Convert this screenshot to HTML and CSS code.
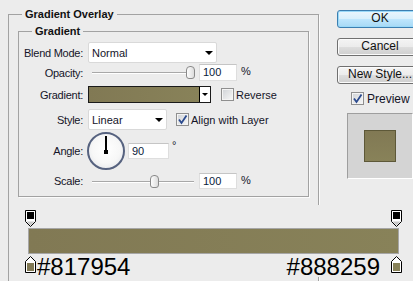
FILE: index.html
```html
<!DOCTYPE html>
<html>
<head>
<meta charset="utf-8">
<link rel="stylesheet" href="styles.css">
</head>
<body>
<div class="dialog">
  <fieldset class="group outer">
    <legend class="title">Gradient Overlay</legend>
    <fieldset class="group inner">
      <legend class="subtitle">Gradient</legend>
      <div class="row r-blend">
        <span class="lbl">Blend Mode:</span>
        <div class="select w-blend"><span class="val">Normal</span><i class="arrow"></i></div>
      </div>
      <div class="row r-opacity">
        <span class="lbl">Opacity:</span>
        <div class="slider"><div class="thumb" style="left:94px"></div></div>
        <div class="num">100</div><span class="unit">%</span>
      </div>
      <div class="row r-grad">
        <span class="lbl">Gradient:</span>
        <div class="gradpick"><div class="gradfill"></div><div class="gradarrow"><i class="arrow"></i></div></div>
        <span class="cb"></span><span class="cbtext">Reverse</span>
      </div>
      <div class="row r-style">
        <span class="lbl">Style:</span>
        <div class="select w-style"><span class="val">Linear</span><i class="arrow"></i></div>
        <span class="cb checked"><svg width="11" height="11" viewBox="0 0 11 11"><path d="M2 5.5 L4.5 9 L9.5 1.5" fill="none" stroke="#2b4a8e" stroke-width="1.8"/></svg></span><span class="cbtext">Align with Layer</span>
      </div>
      <div class="row r-angle">
        <span class="lbl">Angle:</span>
        <div class="dial"><div class="needle"></div><div class="hub"></div></div>
        <div class="num short">90</div><span class="deg">°</span>
      </div>
      <div class="row r-scale">
        <span class="lbl">Scale:</span>
        <div class="slider"><div class="thumb" style="left:58px"></div></div>
        <div class="num">100</div><span class="unit">%</span>
      </div>
    </fieldset>
  </fieldset>
  <div class="side">
    <div class="btn default">OK</div>
    <div class="btn">Cancel</div>
    <div class="btn">New Style...</div>
    <div class="preview-row">
      <span class="cb checked"><svg width="11" height="11" viewBox="0 0 11 11"><path d="M2 5.5 L4.5 9 L9.5 1.5" fill="none" stroke="#2b4a8e" stroke-width="1.8"/></svg></span><span class="cbtext big">Preview</span>
    </div>
    <div class="preview-box"><div class="preview-swatch"></div></div>
  </div>
</div>

<div class="editor">
  <div class="stops">
    <svg class="stop" width="11" height="17" viewBox="0 0 11 17"><path d="M0.5 0.5 H10.5 V11.5 L5.5 16.5 L0.5 11.5 Z" fill="#fff" stroke="#000"/><rect x="2" y="2" width="7" height="7" fill="#000"/><path d="M1.5 11.5 H9.5 L5.5 15.5 Z" fill="#c8c8c8"/></svg>
    <svg class="stop" width="11" height="17" viewBox="0 0 11 17"><path d="M0.5 0.5 H10.5 V11.5 L5.5 16.5 L0.5 11.5 Z" fill="#fff" stroke="#000"/><rect x="2" y="2" width="7" height="7" fill="#000"/><path d="M1.5 11.5 H9.5 L5.5 15.5 Z" fill="#c8c8c8"/></svg>
  </div>
  <div class="bar"></div>
  <div class="labels">
    <div class="lab-left">
      <svg class="stop" width="11" height="17" viewBox="0 0 11 17"><path d="M5.5 0.5 L10.5 5.5 V16.5 H0.5 V5.5 Z" fill="#fff" stroke="#000"/><rect x="2" y="7" width="7" height="8" fill="#817954"/></svg>
      <span class="hex">#817954</span>
    </div>
    <div class="lab-right">
      <span class="hex">#888259</span>
      <svg class="stop" width="11" height="17" viewBox="0 0 11 17"><path d="M5.5 0.5 L10.5 5.5 V16.5 H0.5 V5.5 Z" fill="#fff" stroke="#000"/><rect x="2" y="7" width="7" height="8" fill="#888259"/></svg>
    </div>
  </div>
</div>
</body>
</html>
```
FILE: styles.css
```css
html, body {
  margin: 0;
  padding: 0;
  background: #ececec;
  width: 413px;
  height: 281px;
  overflow: hidden;
}
body {
  position: relative;
  font-family: "Liberation Sans", Arial, sans-serif;
  font-size: 11px;
  color: #141428;
}
.dialog {
  display: flex;
  align-items: flex-start;
}
.group {
  box-sizing: border-box;
  margin: 0;
  min-inline-size: 0;
  border: 1px solid #a2a2a2;
  box-shadow: 1px 1px 0 #fbfbfb;
}
.outer {
  flex: none;
  width: 311px;
  height: 273px;
  margin-top: 8px;
  margin-left: 8px;
  padding: 0 9px;
  border-bottom: 0;
}
.title {
  font-weight: bold;
  line-height: 13px;
  padding: 0 3px;
  margin-left: 4px;
  color: #111;
}
.inner {
  width: 291px;
  margin-top: 4px;
  padding: 4px 0 7px 0;
}
.subtitle {
  font-weight: bold;
  line-height: 13px;
  padding: 0 3px;
  margin-left: 13px;
  color: #111;
}
.row {
  display: flex;
  align-items: center;
}
.lbl {
  flex: none;
  width: 64px;
  margin-right: 5px;
  text-align: right;
  white-space: nowrap;
  letter-spacing: -0.25px;
}
.r-blend { height: 21px; }
.r-opacity { height: 17px; margin-top: 1px; }
.r-grad { height: 17px; margin-top: 5px; }
.r-style { height: 21px; margin-top: 6px; }
.r-angle { height: 38px; margin-top: 2px; }
.r-scale { height: 16px; margin-top: 3px; }

.select {
  box-sizing: border-box;
  height: 21px;
  background: #fff;
  border: 1px solid #d9d9d9;
  border-radius: 2px;
  display: flex;
  align-items: center;
  padding-left: 3px;
  padding-right: 3px;
  flex: none;
}
.select .val { flex: 1; }
.w-blend { width: 129px; }
.w-style { width: 79px; }
.arrow {
  display: block;
  width: 0;
  height: 0;
  border-left: 4px solid transparent;
  border-right: 4px solid transparent;
  border-top: 4px solid #000;
}

.slider {
  position: relative;
  flex: none;
  width: 102px;
  height: 13px;
  margin-left: 4px;
}
.slider::before {
  content: "";
  position: absolute;
  left: 0;
  right: 0;
  top: 6px;
  height: 1px;
  background: #a8a8a8;
  box-shadow: 0 1px 0 #fff;
}
.thumb {
  position: absolute;
  top: 0;
  box-sizing: border-box;
  width: 9px;
  height: 13px;
  border: 1px solid #8a8a8a;
  border-radius: 4px 4px 3px 3px;
  background: linear-gradient(to right, #fdfdfd, #dcdcdc);
}
.num {
  box-sizing: border-box;
  flex: none;
  width: 38px;
  height: 17px;
  margin-left: 5px;
  background: #fff;
  border: 1px solid #dedede;
  border-top-color: #c5c5c5;
  padding-left: 3px;
  line-height: 15px;
  color: #0a1a3a;
}
.r-scale .num { height: 16px; line-height: 14px; }
.num.short {
  width: 41px;
  height: 16px;
  line-height: 14px;
  margin-left: 3px;
}
.unit { margin-left: 4px; margin-top: -3px; }
.deg { margin-left: 3px; margin-top: -12px; }

.gradpick {
  box-sizing: border-box;
  flex: none;
  width: 123px;
  height: 17px;
  border: 1px solid #1a1a1a;
  display: flex;
}
.gradfill {
  flex: 1;
  background: linear-gradient(to right, #817954, #888259);
  border-right: 1px solid #000;
}
.gradarrow {
  width: 10px;
  background: #fff;
  display: flex;
  align-items: center;
  justify-content: center;
}
.gradarrow .arrow {
  border-left-width: 3px;
  border-right-width: 3px;
  border-top-width: 3px;
}

.cb {
  box-sizing: border-box;
  flex: none;
  width: 13px;
  height: 13px;
  border: 1px solid #8f8f8f;
  background: linear-gradient(135deg, #cfd2d6, #f8f8f8);
  box-shadow: inset 0 0 0 1px #f4f4f4;
  display: flex;
  align-items: center;
  justify-content: center;
}
.cb svg { display: block; }
.r-grad .cb { margin-left: 10px; }
.r-style .cb { margin-left: 9px; }
.cbtext { margin-left: 2px; white-space: nowrap; }
.cbtext.big { margin-left: 3px; font-size: 12px; }

.dial {
  position: relative;
  flex: none;
  box-sizing: border-box;
  width: 38px;
  height: 38px;
  margin-left: -1px;
  border-radius: 50%;
  border: 2px solid #56627f;
  background: radial-gradient(circle at 50% 45%, #ffffff 0%, #f7f7f7 55%, #dde0e6 100%);
}
.needle {
  position: absolute;
  left: 16px;
  top: 2px;
  width: 2px;
  height: 16px;
  background: #000;
}
.hub {
  position: absolute;
  left: 15px;
  top: 16px;
  width: 4px;
  height: 4px;
  background: #000;
}

.side {
  flex: none;
  display: flex;
  flex-direction: column;
  align-items: flex-start;
  margin-left: 18px;
  padding-top: 10px;
}
.btn {
  box-sizing: border-box;
  width: 86px;
  height: 18px;
  margin-bottom: 10px;
  border: 1px solid #707070;
  border-radius: 3px;
  background: linear-gradient(#f4f4f4 0%, #ececec 48%, #dddddd 52%, #cfcfcf 100%);
  box-shadow: inset 0 0 0 1px #fbfbfb;
  text-align: center;
  font-size: 12px;
  line-height: 15px;
  color: #111;
}
.btn.default {
  border-color: #3c7fb1;
  background: linear-gradient(#eaf6fd 0%, #d9f0fc 48%, #bee6fd 52%, #a7d9f5 100%);
  box-shadow: inset 0 0 0 1px #9ad9f8;
}
.preview-row {
  display: flex;
  align-items: center;
  margin-top: -3px;
  margin-left: 14px;
  height: 15px;
}
.preview-box {
  box-sizing: border-box;
  width: 66px;
  height: 66px;
  margin-top: 7px;
  margin-left: 10px;
  background: #d4d4d4;
  border: 1px solid #9e9e9e;
  border-right-color: #fff;
  border-bottom-color: #fff;
  display: flex;
  align-items: center;
  justify-content: center;
}
.preview-swatch {
  box-sizing: border-box;
  width: 32px;
  height: 32px;
  border: 1px solid #5d5838;
  background: linear-gradient(to bottom, #817954, #888259);
}

.editor {
  position: absolute;
  left: 12px;
  top: 205px;
  box-sizing: border-box;
  width: 401px;
  height: 72px;
  padding: 5px 0 0 13px;
  background: #ececec;
}
.stops {
  display: flex;
  justify-content: space-between;
  width: 377px;
  height: 17px;
}
.stop { display: block; flex: none; }
.bar {
  box-sizing: border-box;
  width: 371px;
  height: 26px;
  margin: 1px 0 0 3px;
  border: 1px solid #a6a6a6;
  background: linear-gradient(to right, #817954, #888259);
}
.labels {
  display: flex;
  justify-content: space-between;
  width: 377px;
  margin-top: 2px;
}
.lab-left, .lab-right {
  display: flex;
  align-items: flex-start;
}
.hex {
  font-family: "Liberation Sans", Arial, sans-serif;
  font-size: 24px;
  line-height: 22px;
  color: #000;
}
.lab-left .hex { margin-left: 1px; }
.lab-right .hex { margin-right: 11px; }
```
